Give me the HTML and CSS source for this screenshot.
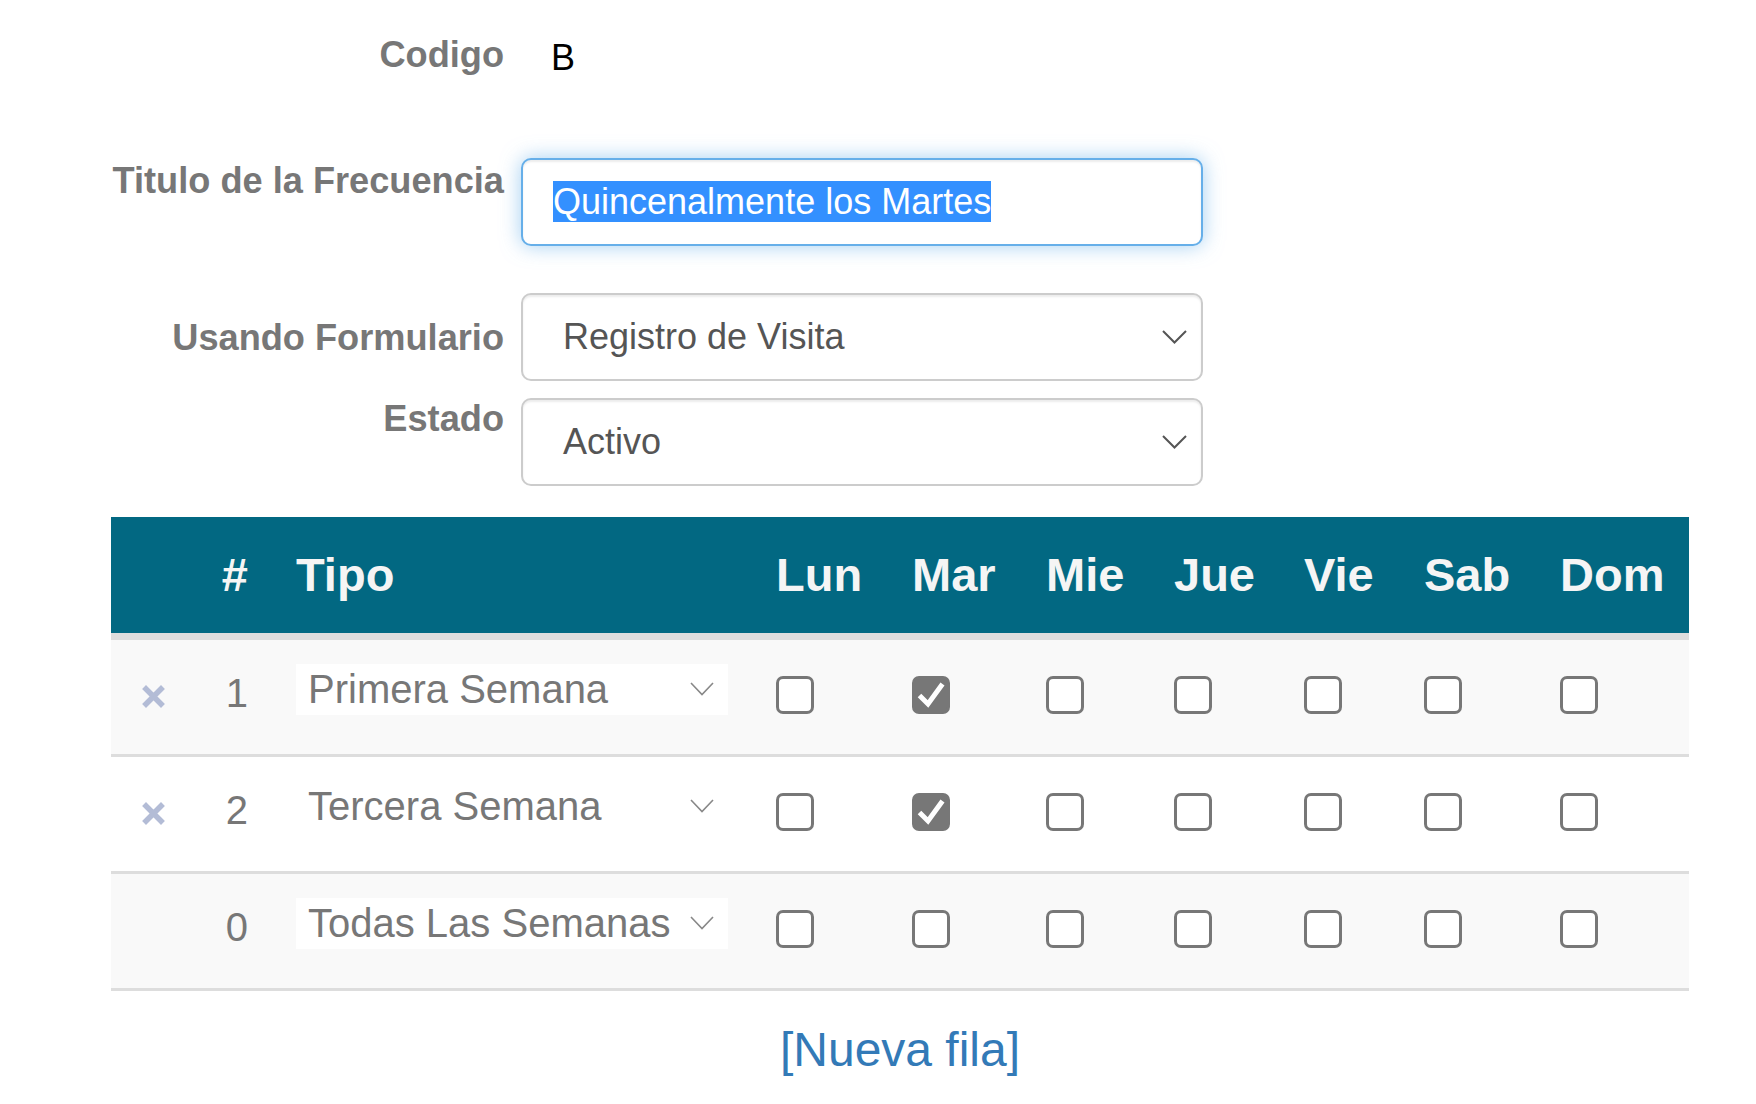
FILE: index.html
```html
<!DOCTYPE html>
<html lang="es">
<head>
<meta charset="utf-8">
<title>Frecuencia</title>
<link rel="stylesheet" href="styles.css">
</head>
<body>
<div class="page">
  <form class="form">
    <div class="row row-code">
      <label class="label">Codigo</label>
      <div class="static">B</div>
    </div>
    <div class="row row-title">
      <label class="label label-title">Titulo de la Frecuencia</label>
      <div class="control control-focus"><span class="selected">Quincenalmente los Martes</span></div>
    </div>
    <div class="row row-form">
      <label class="label label-low">Usando Formulario</label>
      <div class="control select">
        <span>Registro de Visita</span>
        <svg class="chev" width="25" height="14" viewBox="0 0 25 14"><polyline points="1,1 12.5,12.5 24,1" fill="none" stroke="#555" stroke-width="2"/></svg>
      </div>
    </div>
    <div class="row row-state">
      <label class="label">Estado</label>
      <div class="control select">
        <span>Activo</span>
        <svg class="chev" width="25" height="14" viewBox="0 0 25 14"><polyline points="1,1 12.5,12.5 24,1" fill="none" stroke="#555" stroke-width="2"/></svg>
      </div>
    </div>
  </form>

  <table class="grid">
    <colgroup>
      <col class="c-del"><col class="c-num"><col class="c-tipo">
      <col class="c-lun"><col class="c-mar"><col class="c-mie"><col class="c-jue"><col class="c-vie"><col class="c-sab"><col class="c-dom">
    </colgroup>
    <thead>
      <tr>
        <th></th><th class="num">#</th><th>Tipo</th>
        <th>Lun</th><th>Mar</th><th>Mie</th><th>Jue</th><th>Vie</th><th>Sab</th><th>Dom</th>
      </tr>
    </thead>
    <tbody>
      <tr class="striped">
        <td class="del"><svg class="x" width="23" height="23" viewBox="0 0 23 23"><path d="M4 4 L19 19 M19 4 L4 19" stroke="#b3bcd6" stroke-width="5.5" stroke-linecap="square"/></svg></td>
        <td class="num">1</td>
        <td class="tipo"><div class="tsel"><span>Primera Semana</span><svg width="24" height="14" viewBox="0 0 24 14"><polyline points="1,1 12,12.5 23,1" fill="none" stroke="#888" stroke-width="1.6"/></svg></div></td>
        <td class="day"><span class="cb"></span></td>
        <td class="day"><span class="cb on"><svg width="32" height="32" viewBox="0 0 32 32"><path d="M4.5 16.5 L13 25 L27.5 5" fill="none" stroke="#fff" stroke-width="5"/></svg></span></td>
        <td class="day"><span class="cb"></span></td>
        <td class="day"><span class="cb"></span></td>
        <td class="day"><span class="cb"></span></td>
        <td class="day"><span class="cb"></span></td>
        <td class="day"><span class="cb"></span></td>
      </tr>
      <tr>
        <td class="del"><svg class="x" width="23" height="23" viewBox="0 0 23 23"><path d="M4 4 L19 19 M19 4 L4 19" stroke="#b3bcd6" stroke-width="5.5" stroke-linecap="square"/></svg></td>
        <td class="num">2</td>
        <td class="tipo"><div class="tsel"><span>Tercera Semana</span><svg width="24" height="14" viewBox="0 0 24 14"><polyline points="1,1 12,12.5 23,1" fill="none" stroke="#888" stroke-width="1.6"/></svg></div></td>
        <td class="day"><span class="cb"></span></td>
        <td class="day"><span class="cb on"><svg width="32" height="32" viewBox="0 0 32 32"><path d="M4.5 16.5 L13 25 L27.5 5" fill="none" stroke="#fff" stroke-width="5"/></svg></span></td>
        <td class="day"><span class="cb"></span></td>
        <td class="day"><span class="cb"></span></td>
        <td class="day"><span class="cb"></span></td>
        <td class="day"><span class="cb"></span></td>
        <td class="day"><span class="cb"></span></td>
      </tr>
      <tr class="striped">
        <td class="del"></td>
        <td class="num">0</td>
        <td class="tipo"><div class="tsel"><span>Todas Las Semanas</span><svg width="24" height="14" viewBox="0 0 24 14"><polyline points="1,1 12,12.5 23,1" fill="none" stroke="#888" stroke-width="1.6"/></svg></div></td>
        <td class="day"><span class="cb"></span></td>
        <td class="day"><span class="cb"></span></td>
        <td class="day"><span class="cb"></span></td>
        <td class="day"><span class="cb"></span></td>
        <td class="day"><span class="cb"></span></td>
        <td class="day"><span class="cb"></span></td>
        <td class="day"><span class="cb"></span></td>
      </tr>
    </tbody>
  </table>

  <div class="add"><a href="#" class="add-link">[Nueva fila]</a></div>
</div>
</body>
</html>
```
FILE: styles.css
```css
* { box-sizing: border-box; }

html, body {
  margin: 0;
  padding: 0;
  background: #fff;
}

body {
  font-family: "Liberation Sans", Arial, Helvetica, sans-serif;
  color: #555;
}

.page {
  width: 1756px;
  padding: 34px 0 0 111px;
}

.form {
  display: flex;
  flex-direction: column;
  width: 1092px;
}

.row {
  display: grid;
  grid-template-columns: 393px 682px;
  column-gap: 17px;
  align-items: start;
}

.row-title { margin-top: 80px; }
.row-form { margin-top: 47px; }
.row-state { margin-top: 17px; }

.label {
  text-align: right;
  font-size: 36.2px;
  line-height: 41px;
  font-weight: bold;
  color: #777;
  white-space: nowrap;
}

.label-title { padding-top: 2px; }
.label-low { padding-top: 24px; }

.static {
  padding: 3px 0 0 30px;
  font-size: 36px;
  line-height: 41px;
  color: #000;
}

.control {
  height: 88px;
  border: 2px solid #ccc;
  border-radius: 10px;
  padding: 21px 30px;
  font-size: 36px;
  line-height: 42px;
  color: #555;
  background: #fff;
  box-shadow: inset 0 2px 2px rgba(0, 0, 0, 0.075);
  white-space: nowrap;
}

.control-focus {
  border-color: #66afe9;
  box-shadow: inset 0 2px 2px rgba(0, 0, 0, 0.075), 0 0 20px rgba(102, 175, 233, 0.6);
}

.selected {
  background: #3390ff;
  color: #fff;
}

.select {
  display: flex;
  align-items: center;
  justify-content: space-between;
  padding: 21px 14px 21px 40px;
}

.chev { display: block; }

/* table */
.grid {
  margin-top: 31px;
  width: 1578px;
  table-layout: fixed;
  border-collapse: separate;
  border-spacing: 0;
}

.c-del { width: 85px; }
.c-num { width: 74px; }
.c-tipo { width: 480px; }
.c-lun { width: 136px; }
.c-mar { width: 134px; }
.c-mie { width: 128px; }
.c-jue { width: 130px; }
.c-vie { width: 120px; }
.c-sab { width: 136px; }
.c-dom { width: 155px; }

.grid th {
  height: 123px;
  padding: 32px 26px 32px 26px;
  background: #026882;
  color: #f5f5f5;
  font-size: 47px;
  line-height: 52px;
  font-weight: bold;
  text-align: left;
  border-bottom: 7px solid #ddd;
  white-space: nowrap;
}

.grid th.num {
  text-align: right;
  padding-right: 22px;
  padding-left: 0;
}

.grid td {
  height: 117px;
  padding: 0 26px;
  vertical-align: top;
  border-bottom: 3px solid #ddd;
  font-size: 40px;
  line-height: 46px;
  color: #777;
}

.grid tr.striped td { background: #f9f9f9; }

.grid td.del {
  padding: 45px 0 0 0;
  text-align: center;
}

.x {
  display: block;
  margin: 0 auto;
}

.grid td.num {
  padding: 30px 22px 0 0;
  text-align: right;
}

.grid td.tipo { padding-top: 24px; }

.tsel {
  display: flex;
  align-items: center;
  justify-content: space-between;
  width: 432px;
  height: 51px;
  padding: 0 14px 0 12px;
  background: #fff;
  font-size: 40px;
  line-height: 51px;
  color: #777;
  white-space: nowrap;
}

.tsel svg { display: block; margin-top: -1px; }

.grid td.day { padding-top: 36px; }

.cb {
  display: flex;
  align-items: center;
  justify-content: center;
  width: 38px;
  height: 38px;
  border: 3px solid #777;
  border-radius: 7px;
  background: #fff;
}

.cb.on { background: #777; }

.add {
  margin-top: 32px;
  width: 1578px;
  text-align: center;
  font-size: 48px;
  line-height: 54px;
}

.add-link {
  color: #337ab7;
  text-decoration: none;
}
```
